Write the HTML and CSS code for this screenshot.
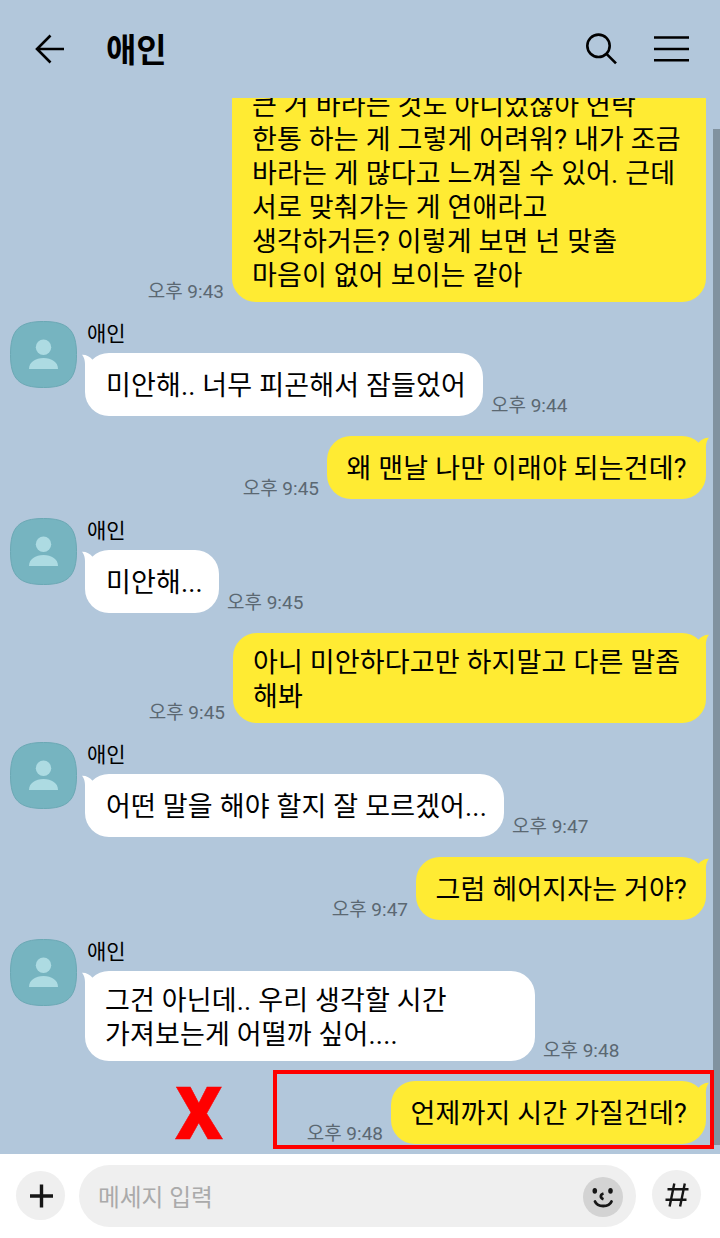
FILE: index.html
```html
<!DOCTYPE html>
<html lang="ko">
<head>
<meta charset="utf-8">
<title>애인</title>
<link rel="stylesheet" href="styles.css">
</head>
<body>
<svg class="defs" aria-hidden="true">
  <symbol id="person" viewBox="0 0 67 67">
    <path class="squircle" d="M33.5.5C58 .5 66.5 9 66.5 33.5S58 66.5 33.5 66.5 .5 58 .5 33.5 9 .5 33.5.5Z"/>
    <circle class="figure" cx="33.5" cy="26.2" r="7.7"/>
    <path class="figure" d="M19 48C19 41 25.5 37 33.5 37S48 41 48 48Z"/>
  </symbol>
  <symbol id="tail" viewBox="0 0 14 26">
    <path d="M0 1.700C4 1.500 8.200 3.500 10.500 6.800L13 9V26H3V15C3.200 9 2.800 5 0 1.700Z"/>
  </symbol>
</svg>
<div class="app">
  <header class="header">
    <svg class="back" viewBox="0 0 30 30"><path d="M29 15H2M15.500 1.500 2 15 15.500 28.500"/></svg>
    <h1 class="title">애인</h1>
    <svg class="search" viewBox="0 0 32 32"><circle cx="12.500" cy="12.800" r="11.200"/><path d="M20.500 20.800 30 30.300"/></svg>
    <svg class="menu" viewBox="0 0 36 28"><path d="M0 2.500H35M0 14H35M0 25.300H35"/></svg>
  </header>

  <main class="chat">
    <div class="row mine">
      <time class="time">오후 9:43</time>
      <div class="bubble long w474">큰 거 바라는 것도 아니었잖아 연락<br>한통 하는 게 그렇게 어려워? 내가 조금<br>바라는 게 많다고 느껴질 수 있어. 근데<br>서로 맞춰가는 게 연애라고<br>생각하거든? 이렇게 보면 넌 맞출<br>마음이 없어 보이는 같아</div>
    </div>
    <div class="row theirs">
      <svg class="avatar"><use href="#person"/></svg>
      <div class="body">
        <div class="name">애인</div>
        <div class="line"><div class="bubble w398"><svg class="tail"><use href="#tail"/></svg>미안해.. 너무 피곤해서 잠들었어</div><time class="time">오후 9:44</time></div>
      </div>
    </div>
    <div class="row mine">
      <time class="time">오후 9:45</time>
      <div class="bubble w379"><svg class="tail"><use href="#tail"/></svg>왜 맨날 나만 이래야 되는건데?</div>
    </div>
    <div class="row theirs">
      <svg class="avatar"><use href="#person"/></svg>
      <div class="body">
        <div class="name">애인</div>
        <div class="line"><div class="bubble w134"><svg class="tail"><use href="#tail"/></svg>미안해...</div><time class="time">오후 9:45</time></div>
      </div>
    </div>
    <div class="row mine">
      <time class="time">오후 9:45</time>
      <div class="bubble long w473"><svg class="tail"><use href="#tail"/></svg>아니 미안하다고만 하지말고 다른 말좀<br>해봐</div>
    </div>
    <div class="row theirs">
      <svg class="avatar"><use href="#person"/></svg>
      <div class="body">
        <div class="name">애인</div>
        <div class="line"><div class="bubble w419"><svg class="tail"><use href="#tail"/></svg>어떤 말을 해야 할지 잘 모르겠어...</div><time class="time">오후 9:47</time></div>
      </div>
    </div>
    <div class="row mine">
      <time class="time">오후 9:47</time>
      <div class="bubble w290"><svg class="tail"><use href="#tail"/></svg>그럼 헤어지자는 거야?</div>
    </div>
    <div class="row theirs">
      <svg class="avatar"><use href="#person"/></svg>
      <div class="body">
        <div class="name">애인</div>
        <div class="line"><div class="bubble long w450"><svg class="tail"><use href="#tail"/></svg>그건 아닌데.. 우리 생각할 시간<br>가져보는게 어떨까 싶어....</div><time class="time">오후 9:48</time></div>
      </div>
    </div>
    <div class="row mine">
      <time class="time">오후 9:48</time>
      <div class="bubble w315"><svg class="tail"><use href="#tail"/></svg>언제까지 시간 가질건데?</div>
    </div>
    <div class="scrollbar"></div>
    <div class="mark">X</div>
    <div class="frame"></div>
  </main>

  <footer class="composer">
    <div class="round plus"><svg viewBox="0 0 24 24"><path d="M0 12H23M11.500.5V23.500"/></svg></div>
    <div class="input">
      <span class="placeholder">메세지 입력</span>
      <svg class="smile" viewBox="0 0 40 40">
        <circle class="face" cx="20" cy="20" r="20"/>
        <ellipse cx="11.800" cy="13.800" rx="2.300" ry="2.900"/>
        <ellipse cx="27.500" cy="13.800" rx="2.300" ry="2.900"/>
        <path class="nose" d="M20.500 16.500C17 17.500 17 21 20.500 22.200"/>
        <path class="mouth" d="M12 24.500C14.500 30.500 26 30.500 28.500 24.500"/>
      </svg>
    </div>
    <div class="round hash"><svg viewBox="0 0 24 24"><path d="M2.500 6.200H23.500M.5 16.700H21.500M9.300.5 4.600 23.500M19.800.5 15.100 23.500"/></svg></div>
  </footer>
</div>
</body>
</html>
```

FILE: styles.css
```css
* { box-sizing: border-box; }
body {
  margin: 0;
  font-family: Roboto, "Noto Sans CJK KR", sans-serif;
  color: #000;
}
svg { display: block; flex: none; }
.defs { position: absolute; width: 0; height: 0; }
.app {
  display: flex;
  flex-direction: column;
  width: 720px;
  height: 1238px;
  background: #b2c7db;
}

.header {
  display: flex;
  align-items: center;
  flex: none;
  height: 98px;
  padding: 0 30px 0 35px;
}
.header svg { fill: none; stroke: #000; stroke-width: 2.6; }
.back { width: 30px; height: 30px; }
.title {
  flex: 1;
  margin: 3px 0 0 41px;
  font-size: 33px;
  line-height: 48px;
  font-weight: 700;
}
.search { width: 32px; height: 32px; margin-right: 36px; }
.menu { width: 36px; height: 28px; }

.chat {
  position: relative;
  display: flex;
  flex-direction: column;
  justify-content: flex-end;
  flex: none;
  height: 1056px;
  padding: 0 14px 10px 10px;
  overflow: hidden;
}
.row { display: flex; flex: none; }
.mine { justify-content: flex-end; align-items: flex-end; margin-top: 20px; }
.theirs { align-items: flex-start; margin-top: 19px; }
.avatar { width: 67px; height: 67px; }
.squircle { fill: #76b4c0; stroke: #6ba8b4; stroke-width: 1; }
.figure { fill: #addbe2; }
.body { margin-left: 8px; }
.name {
  height: 32px;
  padding: 1px 0 0 2px;
  font-size: 21px;
  line-height: 24px;
}
.line { display: flex; align-items: flex-end; }
.bubble {
  position: relative;
  padding: 16px 0 13px 21px;
  border-radius: 24px;
  font-size: 27px;
  line-height: 34px;
  letter-spacing: 0.15px;
  white-space: nowrap;
  background: #fff;
}
.mine .bubble { padding-left: 19.5px; background: #ffeb33; }
.bubble.long { padding-top: 13px; padding-bottom: 9px; padding-left: 20px; }
.tail {
  position: absolute;
  top: 0;
  left: -3px;
  width: 14px;
  height: 26px;
  fill: #fff;
}
.mine .tail { left: auto; right: -3px; transform: scaleX(-1); fill: #ffeb33; }
.w474 { width: 474px; }
.w473 { width: 473px; }
.w450 { width: 450px; }
.w419 { width: 419px; }
.w398 { width: 398px; }
.w379 { width: 379px; }
.w315 { width: 315px; }
.w290 { width: 290px; }
.w134 { width: 134px; }
.time {
  padding: 0 8px;
  font-size: 19px;
  line-height: 21px;
  color: #5b6872;
  white-space: nowrap;
}

.scrollbar {
  position: absolute;
  top: 31px;
  right: 0;
  width: 7px;
  height: 1016px;
  background: #81929f;
}
.frame {
  position: absolute;
  left: 273px;
  top: 972px;
  width: 441px;
  height: 79px;
  border: 4px solid #f00;
}
.mark {
  position: absolute;
  left: 169px;
  top: 963px;
  width: 60px;
  text-align: center;
  font: 800 73px/84px "Open Sans", sans-serif;
  padding-top: 8px;
  color: #f00;
  transform: scaleX(0.9);
  -webkit-text-stroke: 0.5px #f00;
}

.composer {
  display: flex;
  flex: none;
  height: 84px;
  padding: 11px 19px 0 16px;
  background: #fff;
}
.round {
  display: flex;
  align-items: center;
  justify-content: center;
  flex: none;
  width: 49px;
  height: 49px;
  border-radius: 50%;
  background: #efefef;
}
.round svg { width: 24px; height: 24px; fill: none; stroke: #161616; }
.plus { margin-top: 6px; }
.plus svg { margin-left: 2px; stroke-width: 3.4; }
.hash { margin-top: 5px; }
.hash svg { stroke-width: 2.4; }
.input {
  display: flex;
  align-items: center;
  justify-content: space-between;
  width: 557px;
  height: 62px;
  margin: 0 16px 0 14px;
  padding: 0 13px 0 19px;
  border-radius: 31px;
  background: #efefef;
}
.placeholder { margin-top: 3px; font-size: 23.700px; line-height: 36px; color: #aaa; }
.smile { width: 40px; height: 40px; margin-top: 2px; fill: #161616; }
.face { fill: #d3d3d3; }
.nose, .mouth { fill: none; stroke: #161616; stroke-width: 2.8; }
.mouth { stroke-linecap: round; }
```
